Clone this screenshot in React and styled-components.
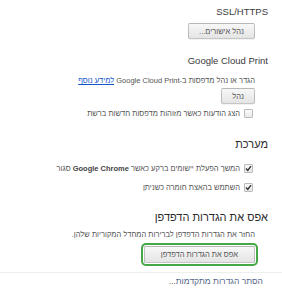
import React from "react";
import styled, { createGlobalStyle } from "styled-components";

// === styles === //

const GlobalStyle = createGlobalStyle`
  html, body {
    margin: 0;
    padding: 0;
    background: #fff;
  }
  body {
    font-family: "Liberation Sans", Arial, sans-serif;
  }
`;

const Page = styled.div`
  direction: rtl;
  width: 282px;
  height: 300px;
  overflow: hidden;
  display: flex;
  flex-direction: column;
  color: #303942;
`;

const SubHeading = styled.h4`
  margin: ${(p) => p.$top}px 0 0;
  padding-right: 14px;
  height: 12px;
  line-height: 12px;
  font-size: 9.5px;
  font-weight: normal;
  color: #3a3a3a;
`;

const Heading = styled.h3`
  margin: ${(p) => p.$top}px 0 0;
  padding-right: 14px;
  height: 16px;
  line-height: 16px;
  font-size: 11px;
  font-weight: normal;
  color: #2a2a2a;
`;

const Content = styled.div`
  padding-right: 27px;
  margin-top: ${(p) => p.$top}px;
  display: flex;
`;

const Text = styled.div`
  height: 10px;
  line-height: 10px;
  font-size: 7.5px;
  color: #555;
  white-space: nowrap;
`;

const Link = styled.a`
  color: #15c;
  text-decoration: underline;
  cursor: pointer;
`;

const Button = styled.button`
  height: ${(p) => p.$h || 16}px;
  padding: 0 ${(p) => p.$pad || 8}px;
  font-family: inherit;
  font-size: 7.5px;
  color: #555;
  border: 1px solid rgba(0, 0, 0, 0.2);
  border-radius: 2px;
  background: linear-gradient(#f8f8f8, #e4e4e4);
  box-shadow: ${(p) =>
    p.$focus
      ? "0 0 0 1px #fff, 0 0 0 3px #44a844"
      : "0 1px 0 rgba(0, 0, 0, 0.05)"};
  cursor: pointer;
`;

const CheckRow = styled.label`
  margin-top: ${(p) => p.$top}px;
  padding-right: 29px;
  height: 14px;
  display: flex;
  align-items: center;
  gap: 4px;
  font-size: 7.5px;
  color: #555;
  white-space: nowrap;

  b {
    font-weight: 600;
    color: #444;
  }
`;

const Box = styled.span`
  width: 7px;
  height: 7px;
  flex: none;
  border: 1px solid #bbb;
  border-radius: 1px;
  background: linear-gradient(#fbfbfb, #e8e8e8);
  display: flex;
  align-items: center;
  justify-content: center;
`;

const Separator = styled.hr`
  margin: 9px 0 0;
  border: 0;
  border-top: 1px solid #eee;
  height: 0;
`;

const Footer = styled.a`
  margin-top: 3px;
  padding-right: 19px;
  height: 10px;
  line-height: 10px;
  font-size: 8.5px;
  color: #56678a;
  cursor: pointer;
`;

// === parts === //

function Check({ checked, top, children }) {
  return (
    <CheckRow $top={top}>
      <Box>
        {checked && (
          <svg width="7" height="7" viewBox="0 0 7 7">
            <path d="M1 3.6 L2.8 5.4 L6 1.2" fill="none" stroke="#333" strokeWidth="1.4" />
          </svg>
        )}
      </Box>
      <span>{children}</span>
    </CheckRow>
  );
}

// === App === //

export default function App() {
  return (
    <>
      <GlobalStyle />
      <Page>
        <SubHeading $top={6}>SSL/HTTPS</SubHeading>
        <Content $top={5}>
          <Button $pad={10}>נהל אישורים...</Button>
        </Content>

        <SubHeading $top={16}>Google Cloud Print</SubHeading>
        <Content $top={9}>
          <Text>
            הגדר או נהל מדפסות ב-Google Cloud Print <Link>למידע נוסף</Link>
          </Text>
        </Content>
        <Content $top={2}>
          <Button $pad={10}>נהל</Button>
        </Content>
        <Check top={2}>הצג הודעות כאשר מזוהות מדפסות חדשות ברשת</Check>

        <Heading $top={16}>מערכת</Heading>
        <Check top={9} checked>
          המשך הפעלת יישומים ברקע כאשר <b>Google Chrome</b> סגור
        </Check>
        <Check top={5} checked>
          השתמש בהאצת חומרה כשניתן
        </Check>

        <Heading $top={15}>אפס את הגדרות הדפדפן</Heading>
        <Content $top={5}>
          <Text>החזר את הגדרות הדפדפן לברירות המחדל המקוריות שלהן.</Text>
        </Content>
        <Content $top={6}>
          <Button $h={17} $pad={16} $focus>
            אפס את הגדרות הדפדפן
          </Button>
        </Content>

        <Separator />
        <Footer>הסתר הגדרות מתקדמות...</Footer>
      </Page>
    </>
  );
}
